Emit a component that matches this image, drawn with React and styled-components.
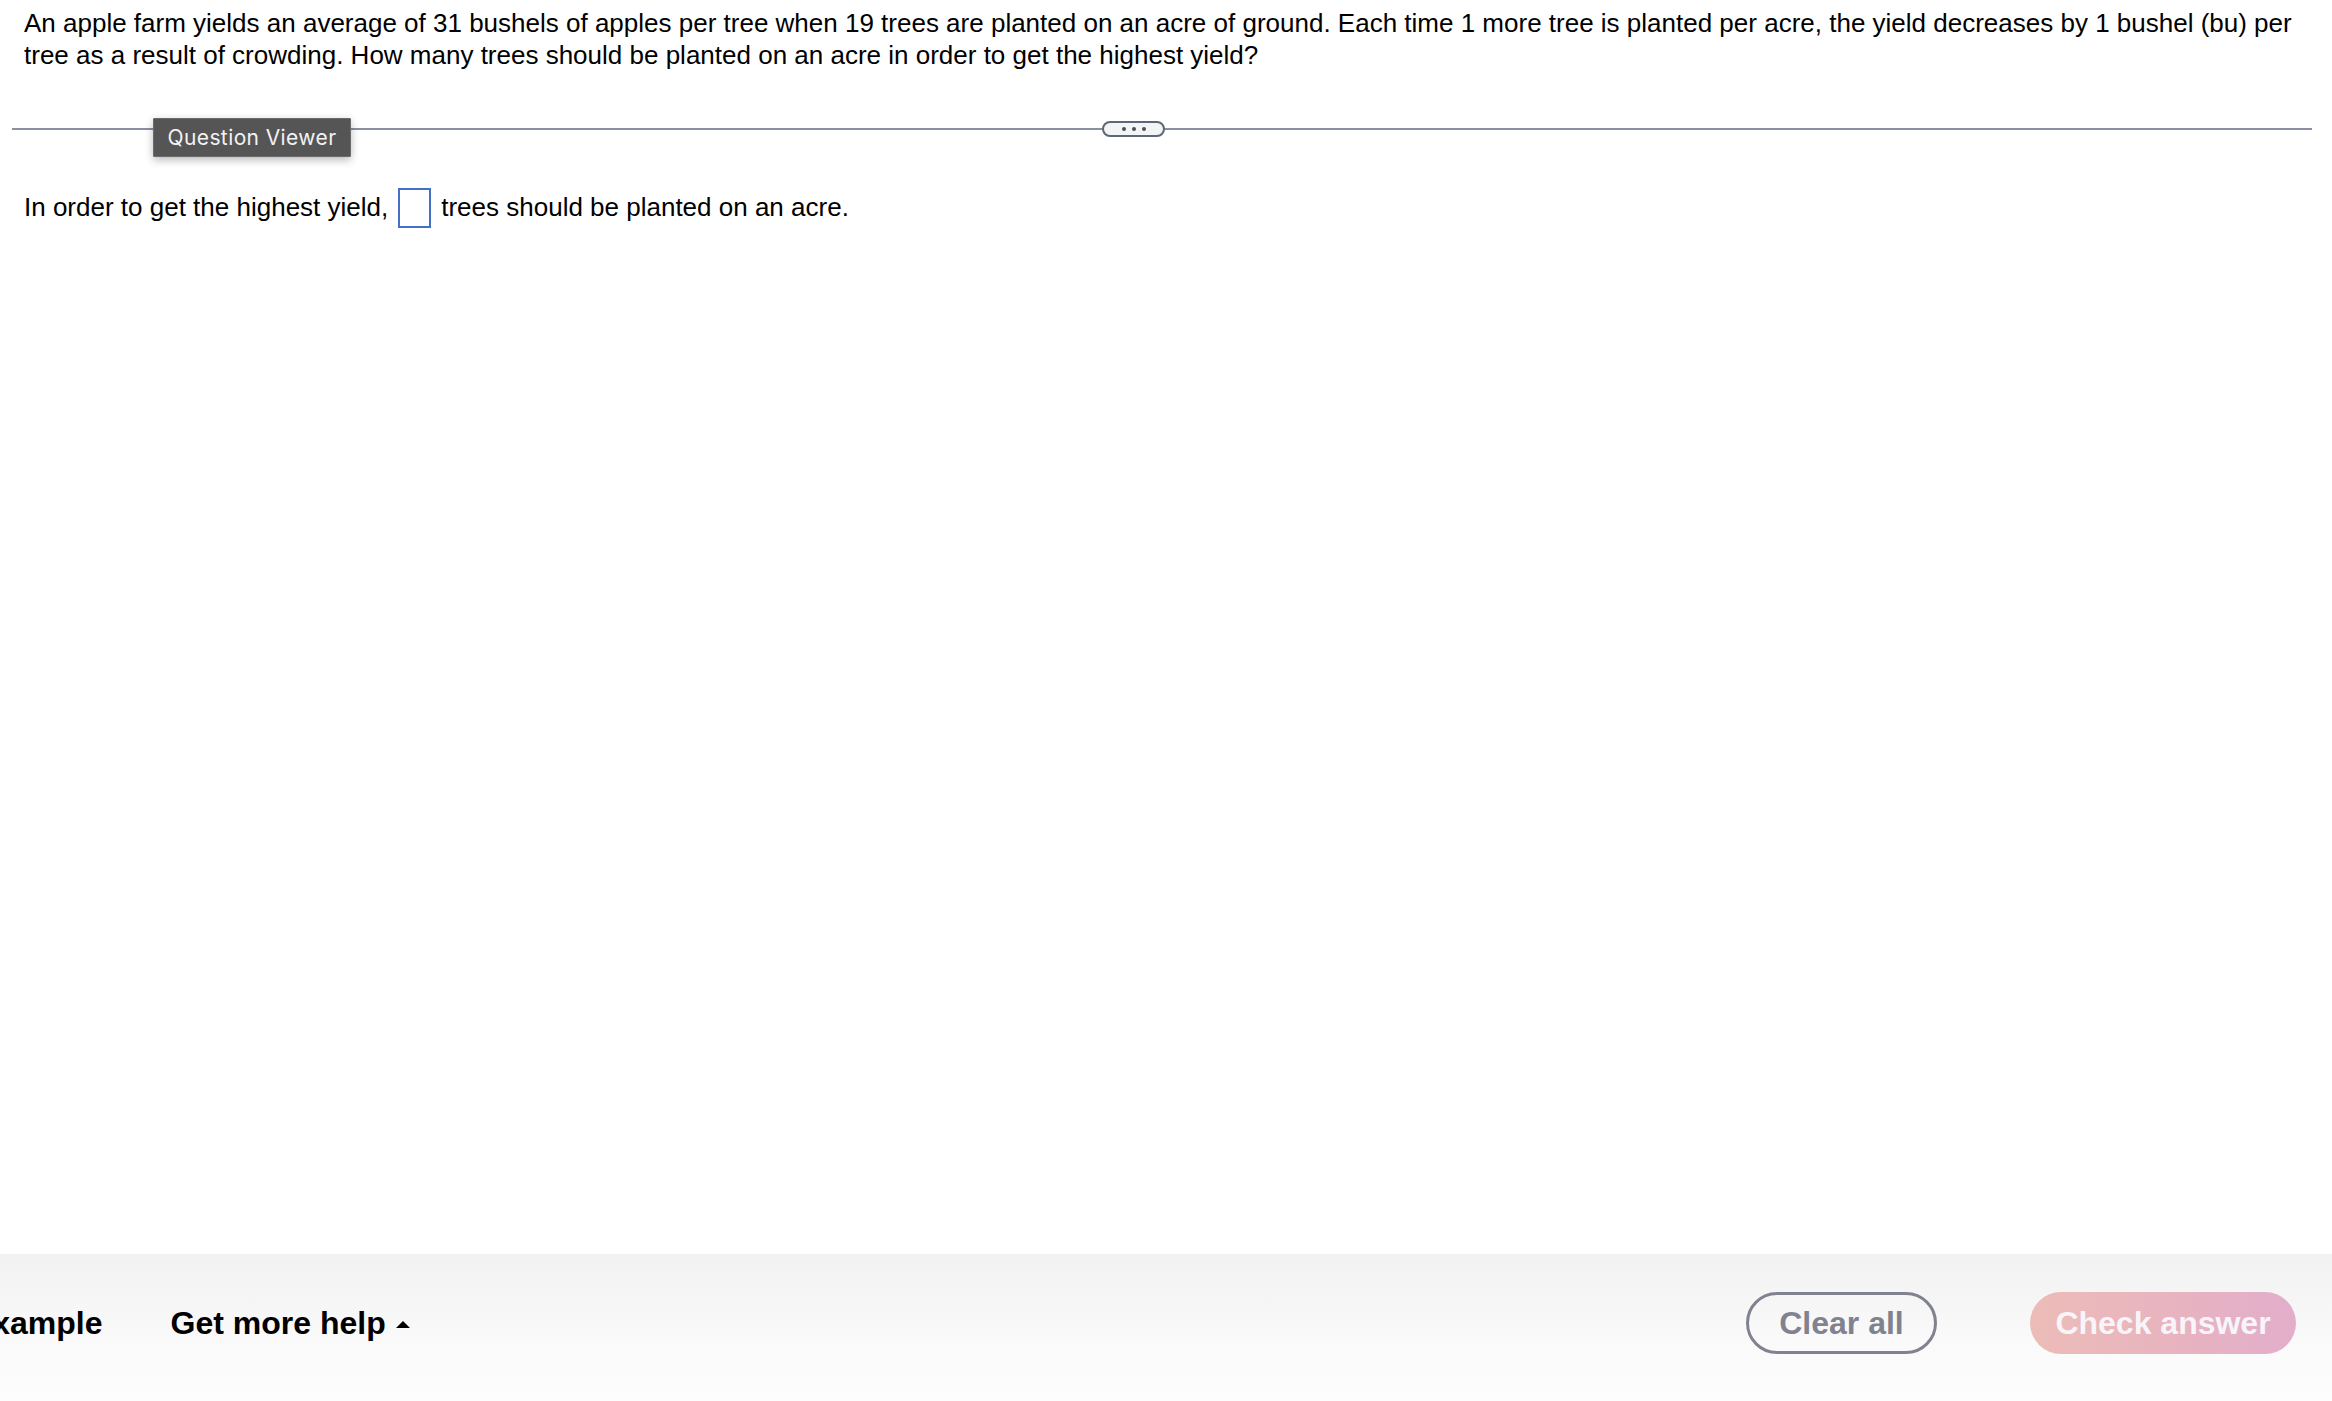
import React from "react";
import styled, { createGlobalStyle } from "styled-components";

const GlobalStyle = createGlobalStyle`
  html, body {
    margin: 0;
    padding: 0;
    background: #ffffff;
  }
  body {
    font-family: "Liberation Sans", Arial, Helvetica, sans-serif;
    color: #000;
  }
  * { box-sizing: border-box; }
`;

const Page = styled.div`
  display: flex;
  flex-direction: column;
  height: 1401px;
  overflow: hidden;
`;

const Main = styled.main`
  flex: 1;
  display: flex;
  flex-direction: column;
`;

const QuestionText = styled.p`
  margin: 0;
  padding: 8px 24px 0 24px;
  font-size: 26px;
  line-height: 31.5px;
`;

const Divider = styled.div`
  position: relative;
  height: 2px;
  margin: 57px 20px 0 12px;
  background: #8a909f;
`;

const ViewerLabel = styled.div`
  position: absolute;
  left: 141px;
  top: -10px;
  width: 198px;
  height: 39px;
  display: flex;
  align-items: center;
  justify-content: center;
  background: #555555;
  border: 1px solid #6b6b6b;
  border-radius: 1px;
  box-shadow: 0 3px 8px rgba(0, 0, 0, 0.28);
  color: #f2f2f2;
  font-family: Inter, "Open Sans", sans-serif;
  font-size: 21px;
  letter-spacing: 0.4px;
`;

const MorePill = styled.button`
  position: absolute;
  left: 1090px;
  top: -7px;
  width: 63px;
  height: 16px;
  padding: 0;
  display: flex;
  align-items: center;
  justify-content: center;
  gap: 6px;
  background: #f3f4f6;
  border: 2px solid #5d6876;
  border-radius: 8px;
`;

const Dot = styled.span`
  width: 4px;
  height: 4px;
  border-radius: 50%;
  background: #4b5058;
`;

const AnswerRow = styled.div`
  display: flex;
  align-items: center;
  margin-top: 58px;
  padding-left: 24px;
  font-size: 26px;
  line-height: 31.5px;
`;

const AnswerBox = styled.span`
  display: inline-block;
  width: 33px;
  height: 40px;
  margin: 0 10px 0 10px;
  border: 2px solid #4670c8;
  background: #fff;
`;

const Footer = styled.footer`
  height: 147px;
  flex-shrink: 0;
  display: flex;
  align-items: flex-start;
  padding: 38px 36px 0 0;
  background: linear-gradient(180deg, #f1f1f1 0%, #fafafa 60%, #fdfdfd 100%);
  overflow: hidden;
  font-family: "Liberation Sans", Arial, Helvetica, sans-serif;
  font-weight: 700;
  font-size: 32px;
`;

const FooterLink = styled.span`
  display: inline-flex;
  align-items: center;
  flex-shrink: 0;
  height: 62px;
  line-height: 62px;
  color: #000;
  white-space: nowrap;
  margin-left: ${(p) => p.$offset || 0}px;
`;

const Caret = styled.span`
  display: inline-block;
  width: 0;
  height: 0;
  margin-left: 10px;
  margin-top: 3px;
  border-left: 7.5px solid transparent;
  border-right: 7.5px solid transparent;
  border-bottom: 7px solid #000;
`;

const Spacer = styled.div`
  flex: 1;
`;

const PillButton = styled.button`
  flex-shrink: 0;
  height: 62px;
  width: ${(p) => p.$width}px;
  margin-left: ${(p) => p.$gap || 0}px;
  padding: 0;
  border-radius: 31px;
  font-family: inherit;
  font-weight: 700;
  font-size: 32px;
  line-height: 56px;
  white-space: nowrap;
  cursor: pointer;
  ${(p) =>
    p.$variant === "outline"
      ? `
    background: transparent;
    border: 3px solid #80838f;
    color: #80838f;
  `
      : `
    background: linear-gradient(90deg, #ecbcb7 0%, #e7b3c1 60%, #e2aecb 100%);
    border: 0;
    color: #f7f5f9;
    line-height: 62px;
  `}
`;

export default function App() {
  return (
    <>
      <GlobalStyle />
      <Page>
        <Main>
          <QuestionText>
            An apple farm yields an average of 31 bushels of apples per tree when 19 trees are planted on an acre of
            ground. Each time 1 more tree is planted per acre, the yield decreases by 1 bushel (bu) per tree as a
            result of crowding. How many trees should be planted on an acre in order to get the highest yield?
          </QuestionText>
          <Divider>
            <ViewerLabel>Question Viewer</ViewerLabel>
            <MorePill aria-label="more">
              <Dot />
              <Dot />
              <Dot />
            </MorePill>
          </Divider>
          <AnswerRow>
            <span>In order to get the highest yield,</span>
            <AnswerBox />
            <span>trees should be planted on an acre.</span>
          </AnswerRow>
        </Main>
        <Footer>
          <FooterLink $offset={-153}>View an example</FooterLink>
          <FooterLink $offset={68}>
            Get more help
            <Caret />
          </FooterLink>
          <Spacer />
          <PillButton $variant="outline" $width={191}>
            Clear all
          </PillButton>
          <PillButton $width={266} $gap={93}>
            Check answer
          </PillButton>
        </Footer>
      </Page>
    </>
  );
}
